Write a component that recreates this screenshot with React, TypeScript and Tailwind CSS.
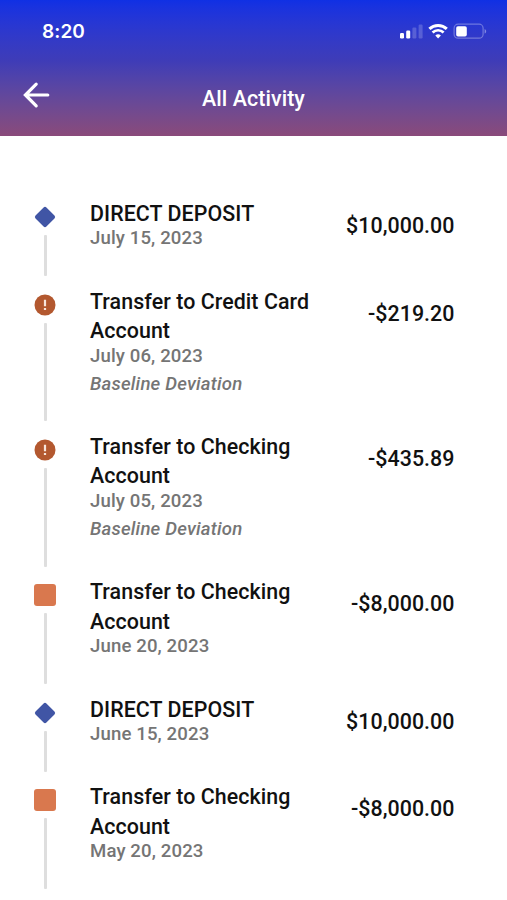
type Kind = 'deposit' | 'alert' | 'transfer';

interface Activity {
  kind: Kind;
  title: string;
  date: string;
  amount: string;
  note?: string;
}

const activities: Activity[] = [
  { kind: 'deposit', title: 'DIRECT DEPOSIT', date: 'July 15, 2023', amount: '$10,000.00' },
  { kind: 'alert', title: 'Transfer to Credit Card Account', date: 'July 06, 2023', amount: '-$219.20', note: 'Baseline Deviation' },
  { kind: 'alert', title: 'Transfer to Checking Account', date: 'July 05, 2023', amount: '-$435.89', note: 'Baseline Deviation' },
  { kind: 'transfer', title: 'Transfer to Checking Account', date: 'June 20, 2023', amount: '-$8,000.00' },
  { kind: 'deposit', title: 'DIRECT DEPOSIT', date: 'June 15, 2023', amount: '$10,000.00' },
  { kind: 'transfer', title: 'Transfer to Checking Account', date: 'May 20, 2023', amount: '-$8,000.00' },
];

function StatusIcons() {
  return (
    <svg className="h-5 w-[88px]" viewBox="0 0 88 20" fill="none">
      {/* signal */}
      <rect x="1" y="12" width="4" height="5.5" rx="1.2" fill="#fff" />
      <rect x="7.2" y="9.5" width="4" height="8" rx="1.2" fill="#fff" />
      <rect x="13.4" y="6.5" width="4" height="11" rx="1.2" fill="#fff" fillOpacity="0.2" />
      <rect x="19.6" y="3.5" width="4" height="14" rx="1.2" fill="#fff" fillOpacity="0.2" />
      {/* wifi */}
      <path d="M30.4 7.9a12.5 12.5 0 0 1 17.4 0" stroke="#fff" strokeWidth="3" />
      <path d="M33.6 11.5a7.9 7.9 0 0 1 11 0" stroke="#fff" strokeWidth="2.7" />
      <path d="M36.3 14.4a4.2 4.2 0 0 1 5.6 0l-2.8 3z" fill="#fff" />
      {/* battery */}
      <rect x="55.1" y="3.2" width="29" height="14" rx="4" stroke="#fff" strokeOpacity="0.32" strokeWidth="1.2" />
      <rect x="57.2" y="5.2" width="10.6" height="10.4" rx="1.8" fill="#fff" />
      <path d="M85.6 7.9c2.1.8 2.1 3.8 0 4.6z" fill="#fff" fillOpacity="0.4" />
    </svg>
  );
}

function Marker({ kind }: { kind: Kind }) {
  return (
    <svg className="h-[22px] w-[22px] shrink-0" viewBox="0 0 22 22">
      {kind === 'deposit' && <rect x="3.3" y="3.3" width="15.4" height="15.4" rx="2" transform="rotate(45 11 11)" fill="#4055a5" />}
      {kind === 'transfer' && <rect width="22" height="22" rx="3" fill="#d9784e" />}
      {kind === 'alert' && (
        <>
          <circle cx="11" cy="11" r="10.5" fill="#b3582f" />
          <path d="M11 5.8v6.4M11 14v2.1" stroke="#f8e6dd" strokeWidth="2.2" />
        </>
      )}
    </svg>
  );
}

function ActivityRow({ item }: { item: Activity }) {
  return (
    <li className="flex">
      <div className="flex w-[22px] flex-col items-center pt-[7px]">
        <Marker kind={item.kind} />
        <div className="mt-[7px] mb-[10.5px] w-[3px] flex-1 rounded-[1px] bg-[#dedede]" />
      </div>
      <div className="ml-[34px] w-[236px] pb-[36.7px]">
        <h2 className="text-[21.4px] leading-[29.5px] font-medium tracking-[0.07px] text-[#111]">{item.title}</h2>
        <p className="text-[18.6px] leading-[21.5px] font-medium tracking-[0.12px] text-[#757575]">{item.date}</p>
        {item.note && (
          <p className="pt-[6.7px] text-[18.6px] leading-[21.5px] font-medium tracking-[0.19px] text-[#757575] italic">{item.note}</p>
        )}
      </div>
      <span className="ml-auto pt-[12px] text-[21.4px] leading-[29.5px] font-medium tracking-[0.04px] text-[#111]">{item.amount}</span>
    </li>
  );
}

export default function App() {
  return (
    <div className="h-[900px] overflow-hidden bg-white font-['Roboto',sans-serif]">
      <header className="h-[136px] bg-linear-to-b from-[#1030e4] via-[#3f3cb7] via-45% to-[#8a4a7a] text-white">
        <div className="flex h-[61px] items-center justify-between pr-5 pl-[42px]">
          <span className="pt-[3px] font-['Inter',sans-serif] text-[19px] font-semibold tracking-[0.1px]">8:20</span>
          <StatusIcons />
        </div>
        <div className="grid h-[75px] grid-cols-[1fr_auto_1fr] items-center">
          <button type="button" aria-label="Back" className="-mt-[7px] ml-[22px] w-7">
            <svg className="h-7 w-7" viewBox="0 0 28 28" fill="none" stroke="#fff" strokeWidth="3.2" strokeLinecap="round">
              <path d="M25.8 14H4M14.2 3.2 3.4 14l10.8 10.8" />
            </svg>
          </button>
          <h1 className="pt-px text-[21.4px] font-medium tracking-[0.07px]">All Activity</h1>
        </div>
      </header>
      <ul className="pt-[62.9px] pr-[52.5px] pl-[34px]">
        {activities.map((item) => (
          <ActivityRow key={item.date} item={item} />
        ))}
      </ul>
    </div>
  );
}
